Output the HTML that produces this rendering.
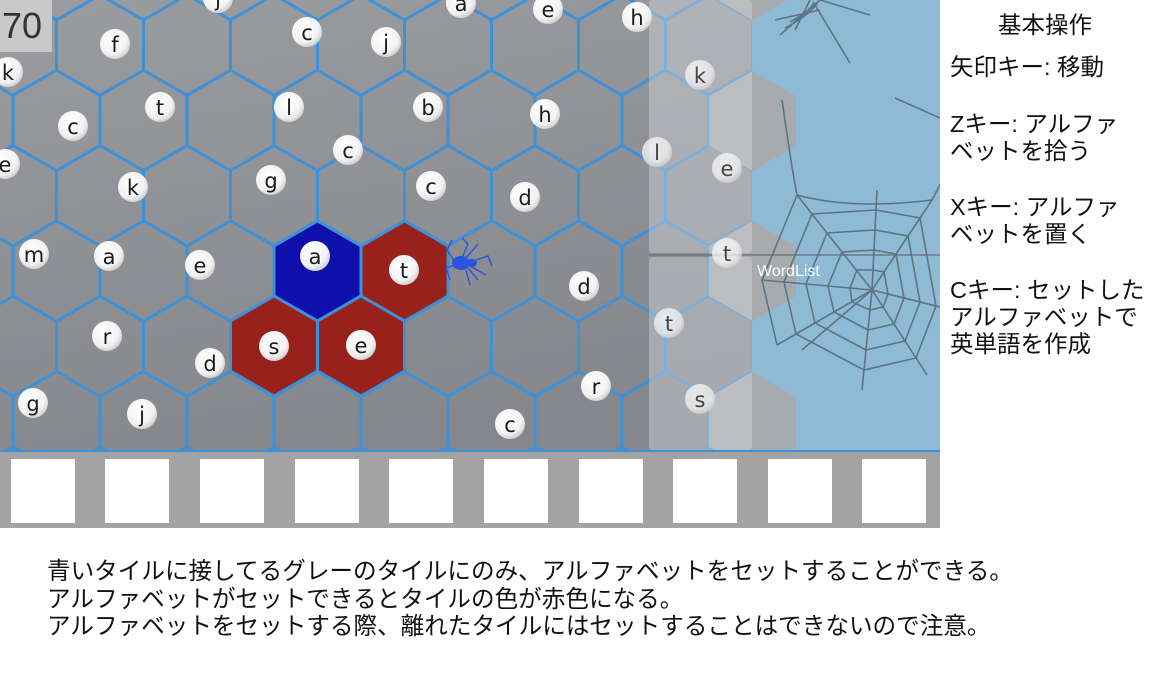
<!DOCTYPE html>
<html><head><meta charset="utf-8"><style>
html,body{margin:0;padding:0;background:#fff;width:1152px;height:700px;overflow:hidden;position:relative;font-family:"Liberation Sans","Noto Sans CJK JP",sans-serif;}
.side{position:absolute;left:950px;top:12px;font-size:23.5px;line-height:27px;color:#111;white-space:nowrap;}
.bot{position:absolute;left:47px;top:559px;font-size:23.6px;line-height:27.5px;color:#111;white-space:nowrap;}
.score{position:absolute;left:0;top:0;width:52px;height:52px;background:#c9c9c9;font-size:36px;line-height:52px;color:#333;text-indent:2px;}
</style></head><body>
<svg width="940" height="530" style="position:absolute;left:0;top:0" xmlns="http://www.w3.org/2000/svg">
<defs>
<linearGradient id="g" x1="0" y1="0" x2="0.3" y2="1"><stop offset="0" stop-color="#9a9ca0"/><stop offset="1" stop-color="#85878c"/></linearGradient>
<pattern id="hx" patternUnits="userSpaceOnUse" x="274" y="220.8" width="87" height="150.6">
<path d="M0 25.1V75.3M87 25.1V75.3M0 25.1L43.5 0L87 25.1M0 75.3L43.5 100.4L87 75.3M43.5 100.4V150.6" stroke="#3c91d8" stroke-width="3" fill="none"/>
</pattern>
<radialGradient id="c" cx="0.4" cy="0.35" r="0.7"><stop offset="0" stop-color="#fff"/><stop offset="0.7" stop-color="#f2f2f2"/><stop offset="1" stop-color="#c8c8c8"/></radialGradient>
</defs>
<rect x="0" y="0" width="940" height="452" fill="#8fbad6"/>
<rect x="0" y="0" width="752" height="452" fill="url(#g)"/>
<rect x="0" y="0" width="752" height="452" fill="url(#hx)"/>
<g fill="#a9aaad">
<polygon points="752.5,-80 796,-55 796,-5 752.5,20 709,-5 709,-55"/>
<polygon points="752.5,71 796,96 796,146 752.5,171 709,146 709,96"/>
<polygon points="752.5,221 796,246 796,296 752.5,321 709,296 709,246"/>
<polygon points="752.5,372 796,397 796,447 752.5,472 709,447 709,397"/>
</g>
<rect x="649" y="0" width="103" height="253" rx="3" fill="rgba(215,217,222,0.42)"/>
<rect x="649" y="257" width="103" height="193" rx="3" fill="rgba(215,217,222,0.42)"/>
<line x1="649" y1="255" x2="940" y2="255" stroke="#6b7a85" stroke-width="1.5"/>
<g stroke="#3c91d8" stroke-width="3">
<polygon points="317.5,221 361,246 361,296 317.5,321 274,296 274,246" fill="#0f0fac"/>
<polygon points="404.5,221 448,246 448,296 404.5,321 361,296 361,246" fill="#99211c"/>
<polygon points="274,296 317.5,321 317.5,371 274,396 230.5,371 230.5,321" fill="#99211c"/>
<polygon points="361,296 404.5,321 404.5,371 361,396 317.5,371 317.5,321" fill="#99211c"/>
</g>
<g stroke="#5d7382" stroke-width="1.6" fill="none">
<g transform="translate(872,290)">
<path d="M0 0L-95 55M0 0L-110 -10M0 0L-75 -95M0 0L5 -100M0 0L60 -90M0 0L80 20M0 0L55 85M0 0L-10 100M0 0L-70 60"/>
<path d="M-20 12L-22 -2L-15 -20L1 -20L12 -18L16 4L11 17L-2 20Z"/>
<path d="M-38 22L-44 -4L-30 -38L2 -40L24 -36L32 8L22 34L-4 40Z"/>
<path d="M-57 33L-66 -6L-45 -57L3 -60L36 -54L48 12L33 51L-6 60Z"/>
<path d="M-76 44L-88 -8L-60 -76L4 -80L48 -72L64 16L44 68L-8 80Z"/>
<path d="M-95 55L-110 -10L-75 -95"/>
<path d="M-75 -95Q-80 -120 -90 -190M60 -90Q90 -150 135 -195M-75 -95Q-20 -80 60 -90"/>
</g>
<g transform="translate(800,0)">
<path d="M-20 35L20 0M-5 30L10 0M20 0L70 15M15 5L50 63M-25 20L20 10"/>
<path d="M-15 28Q10 15 18 2M-10 22Q12 10 14 2"/>
</g>
<path d="M895 98L940 118"/>
</g>
<text x="757" y="276" font-family="Liberation Sans,DejaVu Sans,sans-serif" font-size="16" fill="#fff">WordList</text>
<g stroke="#2a55e0" stroke-width="1.4" fill="none">
<path d="M455 262L447 250L452 240M455 265L446 268L450 280M462 258L468 244L462 238M466 258L478 244M468 268L478 280M466 270L470 285M470 262L488 256L492 266M470 266L486 275"/>
</g>
<ellipse cx="461" cy="263" rx="9" ry="7" fill="#2a55e0"/>
<ellipse cx="472" cy="263" rx="5" ry="4" fill="#2a55e0"/>
<g font-family="DejaVu Sans,Liberation Sans,sans-serif" font-size="21" text-anchor="middle" fill="#1a1a1a">
<circle cx="115" cy="44" r="15" fill="url(#c)"/><text x="115" y="52">f</text>
<circle cx="307" cy="32" r="15" fill="url(#c)"/><text x="307" y="40">c</text>
<circle cx="386" cy="42" r="15" fill="url(#c)"/><text x="386" y="50">j</text>
<circle cx="461" cy="3" r="15" fill="url(#c)"/><text x="461" y="11">a</text>
<circle cx="548" cy="9" r="15" fill="url(#c)"/><text x="548" y="17">e</text>
<circle cx="637" cy="17" r="15" fill="url(#c)"/><text x="637" y="25">h</text>
<circle cx="218" cy="-2" r="15" fill="url(#c)"/><text x="218" y="6">j</text>
<circle cx="8" cy="72" r="15" fill="url(#c)"/><text x="8" y="80">k</text>
<circle cx="73" cy="126" r="15" fill="url(#c)"/><text x="73" y="134">c</text>
<circle cx="160" cy="107" r="15" fill="url(#c)"/><text x="160" y="115">t</text>
<circle cx="289" cy="107" r="15" fill="url(#c)"/><text x="289" y="115">l</text>
<circle cx="428" cy="107" r="15" fill="url(#c)"/><text x="428" y="115">b</text>
<circle cx="545" cy="114" r="15" fill="url(#c)"/><text x="545" y="122">h</text>
<circle cx="348" cy="150" r="15" fill="url(#c)"/><text x="348" y="158">c</text>
<circle cx="5" cy="164" r="15" fill="url(#c)"/><text x="5" y="172">e</text>
<circle cx="133" cy="187" r="15" fill="url(#c)"/><text x="133" y="195">k</text>
<circle cx="271" cy="180" r="15" fill="url(#c)"/><text x="271" y="188">g</text>
<circle cx="431" cy="186" r="15" fill="url(#c)"/><text x="431" y="194">c</text>
<circle cx="525" cy="197" r="15" fill="url(#c)"/><text x="525" y="205">d</text>
<circle cx="657" cy="152" r="15" fill="url(#c)" opacity="0.75"/><text x="657" y="160" fill="#444">l</text>
<circle cx="727" cy="168" r="15" fill="url(#c)" opacity="0.75"/><text x="727" y="176" fill="#444">e</text>
<circle cx="700" cy="75" r="15" fill="url(#c)" opacity="0.75"/><text x="700" y="83" fill="#444">k</text>
<circle cx="34" cy="254" r="15" fill="url(#c)"/><text x="34" y="262">m</text>
<circle cx="109" cy="256" r="15" fill="url(#c)"/><text x="109" y="264">a</text>
<circle cx="200" cy="265" r="15" fill="url(#c)"/><text x="200" y="273">e</text>
<circle cx="315" cy="256" r="15" fill="url(#c)"/><text x="315" y="264">a</text>
<circle cx="404" cy="270" r="15" fill="url(#c)"/><text x="404" y="278">t</text>
<circle cx="584" cy="286" r="15" fill="url(#c)"/><text x="584" y="294">d</text>
<circle cx="727" cy="253" r="15" fill="url(#c)" opacity="0.75"/><text x="727" y="261" fill="#444">t</text>
<circle cx="669" cy="323" r="15" fill="url(#c)" opacity="0.75"/><text x="669" y="331" fill="#444">t</text>
<circle cx="107" cy="336" r="15" fill="url(#c)"/><text x="107" y="344">r</text>
<circle cx="274" cy="346" r="15" fill="url(#c)"/><text x="274" y="354">s</text>
<circle cx="361" cy="345" r="15" fill="url(#c)"/><text x="361" y="353">e</text>
<circle cx="210" cy="363" r="15" fill="url(#c)"/><text x="210" y="371">d</text>
<circle cx="596" cy="386" r="15" fill="url(#c)"/><text x="596" y="394">r</text>
<circle cx="700" cy="399" r="15" fill="url(#c)" opacity="0.75"/><text x="700" y="407" fill="#444">s</text>
<circle cx="33" cy="403" r="15" fill="url(#c)"/><text x="33" y="411">g</text>
<circle cx="142" cy="414" r="15" fill="url(#c)"/><text x="142" y="422">j</text>
<circle cx="510" cy="424" r="15" fill="url(#c)"/><text x="510" y="432">c</text>
</g>
<rect x="0" y="450" width="940" height="3" fill="#3c91d8"/>
<rect x="0" y="452" width="940" height="76" fill="#a3a3a3"/>
<g fill="#fff">
<rect x="11" y="459" width="64" height="64"/><rect x="105" y="459" width="64" height="64"/><rect x="200" y="459" width="64" height="64"/><rect x="295" y="459" width="64" height="64"/><rect x="389" y="459" width="64" height="64"/><rect x="484" y="459" width="64" height="64"/><rect x="579" y="459" width="64" height="64"/><rect x="673" y="459" width="64" height="64"/><rect x="768" y="459" width="64" height="64"/><rect x="862" y="459" width="64" height="64"/>
</g>
</svg>
<div class="score">70</div>
<div class="side">
<div style="padding-left:48px">基本操作</div>
<div style="margin-top:15px">矢印キー: 移動</div>
<div style="margin-top:30px">Zキー: アルファ<br>ベットを拾う</div>
<div style="margin-top:29px">Xキー: アルファ<br>ベットを置く</div>
<div style="margin-top:29px">Cキー: セットした<br>アルファベットで<br>英単語を作成</div>
</div>
<div class="bot">青いタイルに接してるグレーのタイルにのみ、アルファベットをセットすることができる。<br>アルファベットがセットできるとタイルの色が赤色になる。<br>アルファベットをセットする際、離れたタイルにはセットすることはできないので注意。</div>
</body></html>
